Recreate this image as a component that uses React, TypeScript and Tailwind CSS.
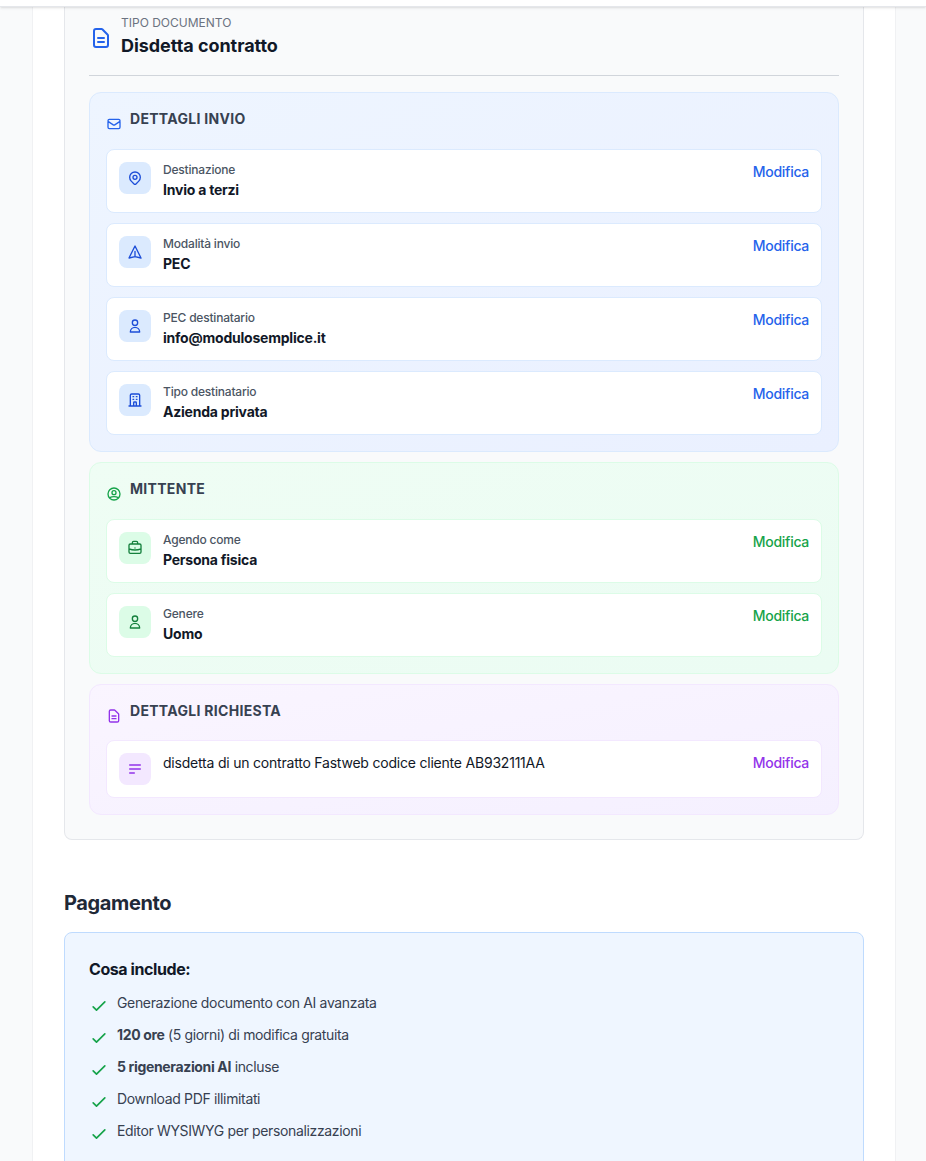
import React from 'react'
import {
  HiOutlineBriefcase,
  HiOutlineCheck,
  HiOutlineDocumentText,
  HiOutlineLocationMarker,
  HiOutlineMail,
  HiOutlineMenuAlt2,
  HiOutlineOfficeBuilding,
  HiOutlinePaperAirplane,
  HiOutlineUser,
  HiOutlineUserCircle,
} from 'react-icons/hi';

const themes = {
  blue: {
    section: 'bg-gradient-to-br from-[#eef5ff] to-[#eaf0ff] border-[#dbeafe]',
    row: 'border-[#dbeafe]',
    box: 'bg-[#dbeafe]',
    icon: 'text-[#2563eb]',
    rowIcon: 'text-[#1d4ed8]',
    link: 'text-[#2563eb]',
  },
  green: {
    section: 'bg-gradient-to-br from-[#effdf4] to-[#ebfcf3] border-[#dcfce7]',
    row: 'border-[#dcfce7]',
    box: 'bg-[#dcfce7]',
    icon: 'text-[#16a34a]',
    rowIcon: 'text-[#15803d]',
    link: 'text-[#16a34a]',
  },
  purple: {
    section: 'bg-gradient-to-br from-[#faf5ff] to-[#f5f0ff] border-[#f3e8ff]',
    row: 'border-[#f3e8ff]',
    box: 'bg-[#f3e8ff]',
    icon: 'text-[#9333ea]',
    rowIcon: 'text-[#9333ea]',
    link: 'text-[#9333ea]',
  },
};

type Theme = keyof typeof themes;

const Row = ({ theme, icon: Icon, label, value }: { theme: Theme; icon: React.ElementType; label: string; value: string }) => {
  const t = themes[theme];
  return (
    <div className={`flex items-start justify-between bg-white border rounded-lg p-3 ${t.row}`}>
      <div className="flex items-start gap-3">
        <div className={`w-8 h-8 rounded-lg flex items-center justify-center ${t.box}`}>
          <Icon size={16} className={t.rowIcon} />
        </div>
        <div>
          <p className="text-xs leading-4 font-medium tracking-[-0.2px] text-[#4b5563]">{label}</p>
          <p className="mt-0.5 text-sm leading-5 font-[650] tracking-[-0.22px] text-[#111827]">{value}</p>
        </div>
      </div>
      <button className={`text-sm leading-5 font-[550] tracking-[-0.28px] ${t.link}`}>Modifica</button>
    </div>
  );
};

const Section = ({ theme, icon: Icon, title, compact, children }: { theme: Theme; icon: React.ElementType; title: string; compact?: boolean; children: React.ReactNode }) => {
  const t = themes[theme];
  return (
    <div className={`border rounded-xl p-4 ${t.section}`}>
      <div className={`flex items-start gap-2 ${compact ? 'mb-4' : 'mb-[17px]'}`}>
        <Icon size={16} className={`mt-[7px] ${t.icon}`} />
        <h3 className="text-sm leading-5 font-[650] uppercase tracking-[0.3px] text-[#374151]">{title}</h3>
      </div>
      <div className="flex flex-col gap-2.5">{children}</div>
    </div>
  );
};

const Include = ({ children }: { children: React.ReactNode }) => (
  <li className="flex items-start gap-2">
    <HiOutlineCheck size={20} className="mt-[3px] shrink-0 text-[#16a34a]" />
    <span className="text-sm leading-5 tracking-[-0.35px] text-[#374151]">{children}</span>
  </li>
);

export default function App() {
  return (
    <div className="relative h-[1161px] overflow-hidden bg-[#f9fafb] font-['Inter',sans-serif]">
      <div className="relative z-10 h-[7px] bg-white shadow-sm border-b border-[#e5e7eb]" />
      <div className="ml-8 w-[864px] bg-white border-x border-[#f0f1f3] px-[31px] pb-8">
        <div className="bg-[#f9fafb] border border-t-0 border-[#e5e7eb] rounded-b-lg px-6 pb-6">
          <div className="flex items-center gap-2 pt-2 pb-[15px] border-b border-[#d1d5db]">
            <HiOutlineDocumentText size={24} className="text-[#2563eb]" />
            <div>
              <p className="text-xs leading-4 text-[#6b7280] uppercase">Tipo documento</p>
              <p className="mt-px text-lg leading-7 font-[650] tracking-[-0.05px] text-[#111827]">Disdetta contratto</p>
            </div>
          </div>
          <div className="mt-4 flex flex-col gap-2.5">
            <Section theme="blue" icon={HiOutlineMail} title="Dettagli invio">
              <Row theme="blue" icon={HiOutlineLocationMarker} label="Destinazione" value="Invio a terzi" />
              <Row theme="blue" icon={HiOutlinePaperAirplane} label="Modalità invio" value="PEC" />
              <Row theme="blue" icon={HiOutlineUser} label="PEC destinatario" value="info@modulosemplice.it" />
              <Row theme="blue" icon={HiOutlineOfficeBuilding} label="Tipo destinatario" value="Azienda privata" />
            </Section>
            <Section theme="green" icon={HiOutlineUserCircle} title="Mittente">
              <Row theme="green" icon={HiOutlineBriefcase} label="Agendo come" value="Persona fisica" />
              <Row theme="green" icon={HiOutlineUser} label="Genere" value="Uomo" />
            </Section>
            <Section theme="purple" compact icon={HiOutlineDocumentText} title="Dettagli richiesta">
              <div className={`flex items-start justify-between bg-white border rounded-lg p-3 ${themes.purple.row}`}>
                <div className="flex items-start gap-3">
                  <div className={`w-8 h-8 rounded-lg flex items-center justify-center ${themes.purple.box}`}>
                    <HiOutlineMenuAlt2 size={16} className={themes.purple.rowIcon} />
                  </div>
                  <p className="text-sm leading-5 tracking-[-0.21px] text-[#111827]">disdetta di un contratto Fastweb codice cliente AB932111AA</p>
                </div>
                <button className={`text-sm leading-5 font-[550] tracking-[-0.28px] ${themes.purple.link}`}>Modifica</button>
              </div>
            </Section>
          </div>
        </div>

        <h2 className="mt-[49px] text-xl leading-7 font-[650] tracking-[-0.38px] text-[#1f2937]">Pagamento</h2>
        <div className="mt-[15px] bg-[#eff6ff] border border-[#bfdbfe] rounded-lg p-6">
          <h3 className="text-base leading-6 font-[650] tracking-[-0.42px] text-[#111827]">Cosa include:</h3>
          <ul className="mt-3 flex flex-col gap-[9px]">
            <Include>Generazione documento con AI avanzata</Include>
            <Include><strong className="font-[650]">120 ore</strong> (5 giorni) di modifica gratuita</Include>
            <Include><strong className="font-[650]">5 rigenerazioni AI</strong> incluse</Include>
            <Include>Download PDF illimitati</Include>
            <Include>Editor WYSIWYG per personalizzazioni</Include>
          </ul>
        </div>
      </div>
    </div>
  );
}
